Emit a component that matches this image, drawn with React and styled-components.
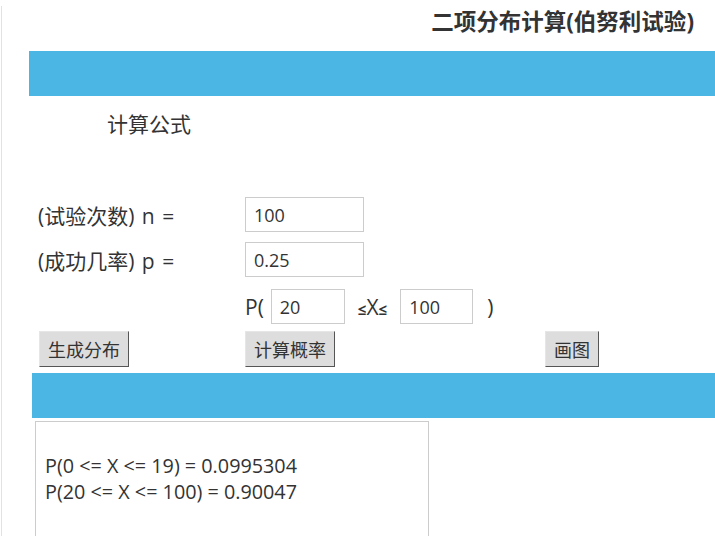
import styled, { createGlobalStyle } from "styled-components";

const GlobalStyle = createGlobalStyle`
  html, body {
    margin: 0;
    padding: 0;
    background: #fff;
    overflow: hidden;
  }
  body {
    font-family: "Open Sans", "Noto Sans CJK SC", sans-serif;
    color: #333;
  }
`;

const Page = styled.div`
  margin-left: 1px;
  border-left: 1px solid #e2e2e2;
  min-height: 536px;
  width: 760px;
`;

const Title = styled.h1`
  margin: 6px 0 0;
  width: 692px;
  text-align: right;
  font-size: 22.5px;
  line-height: 32px;
  font-weight: 700;
  color: #333;
  white-space: nowrap;
`;

const Bar = styled.div`
  height: 45px;
  background: #4bb6e3;
  margin-top: ${(p) => p.$top}px;
  margin-left: ${(p) => p.$left}px;
`;

const Heading = styled.div`
  margin: 15px 0 0 105px;
  font-size: 21px;
  line-height: 26px;
`;

const Form = styled.div`
  margin-top: 60px;
  padding-left: 36px;
`;

const Row = styled.div`
  display: grid;
  grid-template-columns: 207px 300px 1fr;
  align-items: center;
  margin-top: ${(p) => p.$top || 0}px;
`;

const Label = styled.span`
  font-size: 21px;
  word-spacing: 2px;
  white-space: nowrap;
`;

const Input = styled.input`
  box-sizing: border-box;
  width: ${(p) => p.$w}px;
  height: 35px;
  border: 1px solid #cccccc;
  padding: 0 0 0 8px;
  font-family: "Open Sans", "Noto Sans CJK SC", sans-serif;
  font-size: 18px;
  color: #333;
  outline: none;
`;

const Range = styled.div`
  grid-column: 2 / 4;
  display: flex;
  align-items: center;
  font-size: 21px;
`;

const Text = styled.span`
  margin: 0 ${(p) => p.$right || 0}px 0 ${(p) => p.$left || 0}px;
`;

const Le = styled.span`
  font-size: 15px;
  font-weight: 700;
`;

const Button = styled.button`
  justify-self: start;
  height: 36px;
  padding: 0 8px;
  margin-left: ${(p) => p.$left || 0}px;
  background: #dddddd;
  border: 1px solid #e6e6e6;
  border-right-color: #555;
  border-bottom-color: #555;
  font-family: "Open Sans", "Noto Sans CJK SC", sans-serif;
  font-size: 18px;
  color: #333;
  cursor: pointer;
`;

const Result = styled.div`
  box-sizing: border-box;
  margin: 3px 0 0 33px;
  width: 394px;
  min-height: 140px;
  border: 1px solid #cccccc;
  padding: 31px 9px;
  font-size: 19.8px;
  line-height: 26px;
`;

export default function App() {
  return (
    <>
      <GlobalStyle />
      <Page>
        <Title>二项分布计算(伯努利试验)</Title>
        <Bar $top={13} $left={27} />
        <Heading>计算公式</Heading>
        <Form>
          <Row>
            <Label>(试验次数) n =</Label>
            <Input $w={119} defaultValue="100" />
          </Row>
          <Row $top={10}>
            <Label>(成功几率) p =</Label>
            <Input $w={119} defaultValue="0.25" />
          </Row>
          <Row $top={12}>
            <span />
            <Range>
              <Text $right={7}>P(</Text>
              <Input $w={74} defaultValue="20" />
              <Text $left={13} $right={13}>
                <Le>≤</Le>X<Le>≤</Le>
              </Text>
              <Input $w={73} defaultValue="100" />
              <Text $left={14}>)</Text>
            </Range>
          </Row>
          <Row $top={7}>
            <Button $left={1}>生成分布</Button>
            <Button>计算概率</Button>
            <Button>画图</Button>
          </Row>
        </Form>
        <Bar $top={6} $left={30} />
        <Result>
          P(0 &lt;= X &lt;= 19) = 0.0995304
          <br />
          P(20 &lt;= X &lt;= 100) = 0.90047
        </Result>
      </Page>
    </>
  );
}
